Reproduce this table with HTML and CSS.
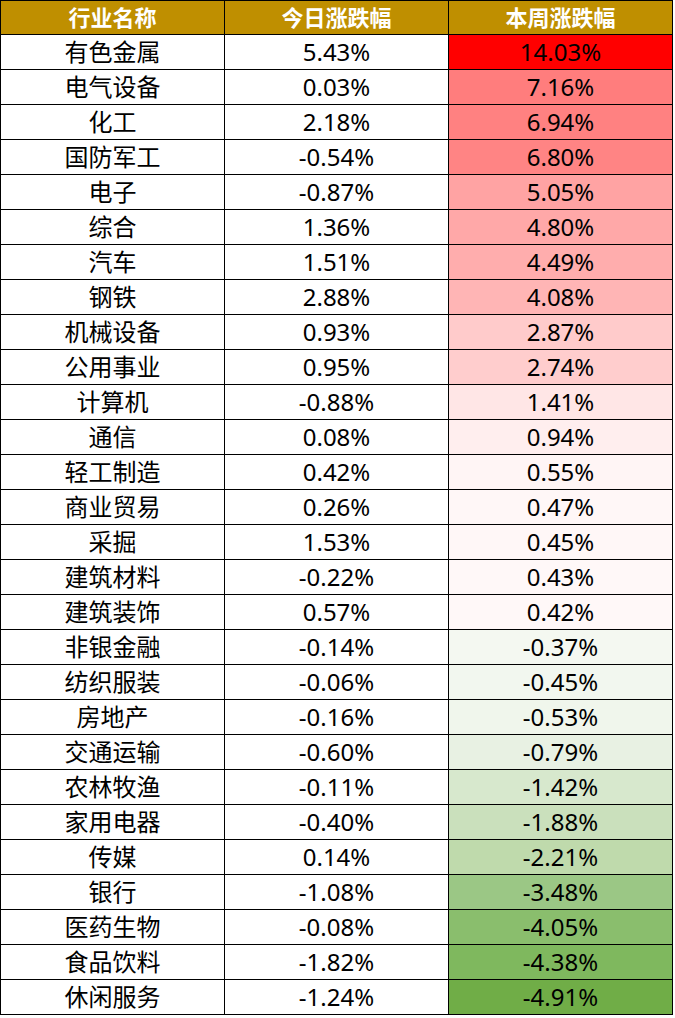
FILE: index.html
```html
<!DOCTYPE html>
<html lang="zh">
<head>
<meta charset="utf-8">
<title>行业涨跌幅</title>
<link rel="stylesheet" href="styles.css">
</head>
<body>
<table class="sheet">
  <thead>
    <tr><th>行业名称</th><th>今日涨跌幅</th><th>本周涨跌幅</th></tr>
  </thead>
  <tbody>
    <tr><td>有色金属</td><td>5.43%</td><td class="wk" style="background:#FF0000">14.03%</td></tr>
    <tr><td>电气设备</td><td>0.03%</td><td class="wk" style="background:#FF7D7D">7.16%</td></tr>
    <tr><td>化工</td><td>2.18%</td><td class="wk" style="background:#FF8181">6.94%</td></tr>
    <tr><td>国防军工</td><td>-0.54%</td><td class="wk" style="background:#FF8484">6.80%</td></tr>
    <tr><td>电子</td><td>-0.87%</td><td class="wk" style="background:#FFA3A3">5.05%</td></tr>
    <tr><td>综合</td><td>1.36%</td><td class="wk" style="background:#FFA8A8">4.80%</td></tr>
    <tr><td>汽车</td><td>1.51%</td><td class="wk" style="background:#FFADAD">4.49%</td></tr>
    <tr><td>钢铁</td><td>2.88%</td><td class="wk" style="background:#FFB5B5">4.08%</td></tr>
    <tr><td>机械设备</td><td>0.93%</td><td class="wk" style="background:#FFCBCB">2.87%</td></tr>
    <tr><td>公用事业</td><td>0.95%</td><td class="wk" style="background:#FFCDCD">2.74%</td></tr>
    <tr><td>计算机</td><td>-0.88%</td><td class="wk" style="background:#FFE6E6">1.41%</td></tr>
    <tr><td>通信</td><td>0.08%</td><td class="wk" style="background:#FFEEEE">0.94%</td></tr>
    <tr><td>轻工制造</td><td>0.42%</td><td class="wk" style="background:#FFF5F5">0.55%</td></tr>
    <tr><td>商业贸易</td><td>0.26%</td><td class="wk" style="background:#FFF7F7">0.47%</td></tr>
    <tr><td>采掘</td><td>1.53%</td><td class="wk" style="background:#FFF7F7">0.45%</td></tr>
    <tr><td>建筑材料</td><td>-0.22%</td><td class="wk" style="background:#FFF8F8">0.43%</td></tr>
    <tr><td>建筑装饰</td><td>0.57%</td><td class="wk" style="background:#FFF8F8">0.42%</td></tr>
    <tr><td>非银金融</td><td>-0.14%</td><td class="wk" style="background:#F4F8F1">-0.37%</td></tr>
    <tr><td>纺织服装</td><td>-0.06%</td><td class="wk" style="background:#F2F7EF">-0.45%</td></tr>
    <tr><td>房地产</td><td>-0.16%</td><td class="wk" style="background:#F0F6EC">-0.53%</td></tr>
    <tr><td>交通运输</td><td>-0.60%</td><td class="wk" style="background:#E8F1E3">-0.79%</td></tr>
    <tr><td>农林牧渔</td><td>-0.11%</td><td class="wk" style="background:#D7E8CD">-1.42%</td></tr>
    <tr><td>家用电器</td><td>-0.40%</td><td class="wk" style="background:#CAE0BC">-1.88%</td></tr>
    <tr><td>传媒</td><td>0.14%</td><td class="wk" style="background:#BFDAAC">-2.21%</td></tr>
    <tr><td>银行</td><td>-1.08%</td><td class="wk" style="background:#9BC785">-3.48%</td></tr>
    <tr><td>医药生物</td><td>-0.08%</td><td class="wk" style="background:#8ABE6D">-4.05%</td></tr>
    <tr><td>食品饮料</td><td>-1.82%</td><td class="wk" style="background:#7FB85E">-4.38%</td></tr>
    <tr><td>休闲服务</td><td>-1.24%</td><td class="wk" style="background:#70AD47">-4.91%</td></tr>
  </tbody>
</table>
</body>
</html>
```

FILE: styles.css
```css
html, body {
  margin: 0;
  padding: 0;
  background: #ffffff;
}

.sheet {
  border-collapse: collapse;
  table-layout: fixed;
  width: 673px;
  font-family: "Noto Sans", "Noto Sans CJK SC", sans-serif;
  color: #000000;
}

.sheet th,
.sheet td {
  border: 1px solid #000000;
  padding: 0;
  text-align: center;
  vertical-align: middle;
  width: 223px;
  white-space: nowrap;
}

.sheet th {
  background: #BF8F00;
  color: #ffffff;
  font-weight: bold;
  font-size: 22px;
  height: 33px;
  line-height: 33px;
}

.sheet td {
  height: 34px;
  line-height: 34px;
  font-size: 24px;
}
```
